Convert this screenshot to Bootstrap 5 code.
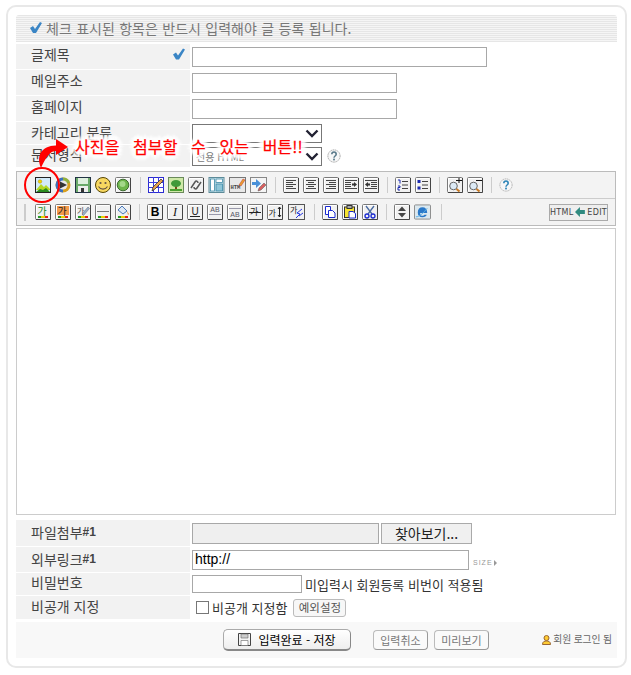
<!DOCTYPE html>
<html lang="ko">
<head>
<meta charset="utf-8">
<title>글쓰기</title>
<link href="https://cdn.jsdelivr.net/npm/bootstrap@5.3.0/dist/css/bootstrap.min.css" rel="stylesheet">
<style>
html,body{background:#fff;margin:0}
body{font-family:"Noto Sans CJK KR","Liberation Sans",sans-serif;font-size:14px;line-height:1;color:#333;position:relative;width:631px;height:675px;overflow:hidden}
.shell{width:621px;height:663px;margin:5px 0 0 6px;border:2px solid #e8e8e8;border-radius:10px;padding:8px}
.stripe{height:27px;margin-bottom:2px;border-radius:3px 3px 0 0;padding-left:14px;padding-bottom:2px;background:repeating-linear-gradient(#e6e6e6 0 1px,#f5f5f5 1px 2px);color:#777;word-spacing:.5px}
.frow{margin-bottom:1px}
.h25{height:25px}.h26{height:26px}.h22{height:22px}.h23{height:23px}
.lab{width:174px;height:100%;background:#f2f2f2;padding-left:15px;padding-right:5px;color:#444;padding-bottom:3px}
.lab.lb6{padding-bottom:6px}.lab.lb5{padding-bottom:5px}.lab.lb4{padding-bottom:4px}.lab.lb2{padding-bottom:1px}
.val{padding-left:2px;height:100%}
.fld.form-control{border:1px solid #a8a8a8;border-radius:0;height:20px;min-height:0;padding:0 2px;font-family:"Liberation Sans",sans-serif;font-size:14px;color:#000;box-shadow:none}
.w295{width:295px!important}.w205{width:205px!important}.w277{width:277px!important}.w110{width:110px!important}.w187{width:187px!important}
.h21{height:21px!important}.h18{height:18px!important}
.ro.form-control{background:#efefef}
.sel.form-select{width:130px;height:19px;min-height:0;border:1px solid #777;border-radius:0;padding:0 20px 0 3px;font-size:10px;line-height:17px;color:#777;background-image:url("data:image/svg+xml,%3csvg xmlns='http://www.w3.org/2000/svg' viewBox='0 0 14 9'%3e%3cpath fill='none' stroke='%23223' stroke-width='2.4' d='M1.500 1.500l5.500 5.500 5.500-5.500'/%3e%3c/svg%3e");background-position:right 2px center;background-size:14px 9px;box-shadow:none}
.sel-a.form-select{margin-top:1px}
.tbox{border:1px solid #bbb;height:55px;margin-top:4px;width:600px}
.tbar{height:26px;background:#f3f3f3}
.tdiv{height:1px;background:#ccc}
.ps18{padding-left:18px}.ps7{padding-left:7px}
.tset{gap:4px}
.ic{width:16px;height:16px;display:block;flex:none}
.ic17{width:17px}
.ic14{width:14px;height:14px}
.ms5{margin-left:5px}
.sepx{width:1px;height:16px;background:#ccc;margin:0 7px 0 8px;flex:none}
.sep9{margin-left:9px}.sep10{margin-left:10px}
.grip{width:2px;height:17px;background:#ccc;margin-right:9px;flex:none}
.nudge{margin-left:1px}
.hedit{width:59px;height:17px;margin-right:7px;border:1px solid #aaa;background:#eee;font:8px "DejaVu Sans",sans-serif;color:#444;letter-spacing:.3px;gap:2px}
.area{display:block;width:600px;height:287px;margin:2px 0 5px;border:1px solid #ccc;resize:none;background:#fff}
.brow{width:91px;height:21px;margin-left:2px;border:1px solid #aaa;background:#f0f0f0;color:#222;font-size:14px;padding:0}
.num{font-family:"Liberation Sans",sans-serif;font-weight:700;font-size:12px;color:#444}
.szs{font:7px "Liberation Sans",sans-serif;letter-spacing:1px;color:#999;margin-left:4px;margin-top:6px;gap:1px}
.tri{width:0;height:0;border-left:3px solid #999;border-top:3px solid transparent;border-bottom:3px solid transparent}
.note{margin-left:3px;color:#333;font-size:13px}
.cbx{width:13px;height:13px;margin:0 3px 0 4px;border:1px solid #777;background:#fff;appearance:none;flex:none}
.ptext{font-size:13px}
.exc{width:53px;height:18px;margin-left:6px;border:1px solid #bbb;border-radius:3px;background:#f7f7f7;font-size:11.5px;color:#555;padding:0}
.foot{height:36px;margin-top:3px;background:#f8f8f8;width:601px}
.btnsv{width:128px;height:22px;margin-left:207px;border:1px solid #aaa;border-right-color:#888;border-bottom:2px solid #888;border-radius:5px;background:linear-gradient(#fff,#eee);color:#000;font-size:12px;padding:0;gap:7px}
.btnsm{width:55px;height:20px;border:1px solid #bbb;border-right-color:#999;border-bottom-color:#999;border-radius:4px;background:#fafafa;color:#777;font-size:11px;padding:0}
.m22{margin-left:22px}.m6{margin-left:6px}
.mem{margin-left:auto;margin-right:5px;font-size:9.8px;color:#666;gap:2px;letter-spacing:-.1px}
.ckm{margin-left:auto;margin-right:0}
.mark-ov{position:absolute;left:0;top:0;pointer-events:none}
.callout{position:absolute;left:75px;top:137px;color:#f00;-webkit-text-stroke:.25px #f00;font-size:16px;line-height:18px;white-space:nowrap;word-spacing:9px;letter-spacing:.1px;
text-shadow:0 0 2px #fff,0 0 3px #fff,4px 0 2px #fff,-4px 0 2px #fff,0 4px 2px #fff,0 -4px 2px #fff,3px 3px 2px #fff,-3px -3px 2px #fff,3px -3px 2px #fff,-3px 3px 2px #fff,2px 0 2px #fff,-2px 0 2px #fff,0 2px 2px #fff,0 -2px 2px #fff,5px 0 3px #fff,-5px 0 3px #fff,0 5px 3px #fff,0 -5px 3px #fff}
</style>
</head>
<body>
<svg width="0" height="0" class="position-absolute">
<defs>
<symbol id="fr" viewBox="0 0 16 16"><rect x=".5" y=".5" width="15" height="15" rx="1" fill="#f1f1f1" stroke="#7a7a7a"/><path d="M15.5 1v14.5H1" fill="none" stroke="#444"/><path d="M1.5 14V1.5H14" fill="none" stroke="#fff"/></symbol>
<symbol id="bar" viewBox="0 0 16 16"><rect x="3" y="12" width="3" height="2" fill="#2a9a2a"/><rect x="6" y="12" width="4" height="2" fill="#e8d000"/><rect x="10" y="12" width="3" height="2" fill="#e02020"/></symbol>
<symbol id="i-img" viewBox="0 0 16 16"><rect x=".5" y=".5" width="15" height="15" fill="#d2eafa" stroke="#222"/><circle cx="5" cy="4.500" r="1.800" fill="#f5d400" stroke="#a08000" stroke-width=".4"/><path d="M1 13l5-6 3 3 2-2 4 4v1H1z" fill="#b4d824"/><path d="M1 15l4-3 3 1 3-2 4 4z" fill="#2a8a1e"/></symbol>
<symbol id="i-med" viewBox="0 0 16 16"><circle cx="8" cy="8" r="7.500" fill="#d8a020"/><path d="M8 .5A7.5 7.5 0 0 0 8 15.500z" fill="#3a6fc0"/><path d="M8 .5a7.500 7.500 0 0 1 7 5L8 8z" fill="#8fb040"/><circle cx="8" cy="8" r="4.500" fill="#e8e8e8"/><path d="M5 4.500l7 3.500-7 3.500z" fill="#333"/></symbol>
<symbol id="i-sav" viewBox="0 0 16 16"><rect x=".5" y=".5" width="15" height="15" fill="#6aa96a" stroke="#234"/><rect x="3" y="1" width="10" height="6" fill="#dff0df"/><rect x="3" y="9" width="10" height="6" fill="#eee"/><rect x="6" y="11" width="3" height="4" fill="#333"/></symbol>
<symbol id="i-smi" viewBox="0 0 16 16"><circle cx="8" cy="8" r="7.500" fill="#f8d860" stroke="#554400"/><circle cx="5.500" cy="6" r="1.100" fill="#654"/><circle cx="10.500" cy="6" r="1.100" fill="#654"/><path d="M3.500 9.500c2 3.500 7 3.500 9 0" fill="none" stroke="#654" stroke-width="1.100"/></symbol>
<symbol id="i-bal" viewBox="0 0 16 16"><use href="#fr"/><circle cx="8" cy="8" r="5.800" fill="#6db54b" stroke="#3c6a30"/><circle cx="7.500" cy="7" r="3" fill="#a4d88a"/></symbol>
<symbol id="i-tab" viewBox="0 0 16 16"><rect x=".5" y=".5" width="15" height="15" fill="#fff" stroke="#2c2cd0"/><path d="M5.500 0v16M10.500 0v16M0 5.500h16M0 10.500h16" stroke="#3a3ae0"/><path d="M4 14l1-4 8-8 2 2-8 8z" fill="#e8a050" stroke="#222" stroke-width=".7"/></symbol>
<symbol id="i-tre" viewBox="0 0 16 16"><rect x=".5" y=".5" width="15" height="15" fill="#cfe9a8" stroke="#6a8a5a"/><rect x="7" y="9" width="2" height="4" fill="#7a4a1a"/><ellipse cx="8" cy="6.500" rx="5" ry="3.500" fill="#3f9a3a"/><rect x="2" y="12" width="12" height="2" fill="#4aa030"/></symbol>
<symbol id="i-lnk" viewBox="0 0 16 16"><use href="#fr"/><path d="M3 11l4-6c1-1.500 3-1 3 1M6 10c0 2 2 2.500 3 1l4-6" fill="none" stroke="#555" stroke-width="1.500"/></symbol>
<symbol id="i-lay" viewBox="0 0 16 16"><rect x=".5" y=".5" width="15" height="15" fill="#cfe4ea" stroke="#5c8a98"/><rect x="2" y="2" width="4" height="12" fill="#fff" stroke="#3d8aa8" stroke-width=".8"/><rect x="7.500" y="2" width="6.500" height="3.500" fill="#fff" stroke="#3d8aa8" stroke-width=".8"/><rect x="7.500" y="7" width="6.500" height="7" fill="#8fc6d8" stroke="#3d8aa8" stroke-width=".8"/></symbol>
<symbol id="i-htm" viewBox="0 0 17 16"><rect x=".5" y=".5" width="16" height="15" fill="#e8e8e8" stroke="#777"/><text x="1.500" y="12" font-family="Liberation Mono,monospace" font-weight="700" font-size="5.500" fill="#444">HTM</text><path d="M10 8l4-6 2 1-4 6z" fill="#e8a030" stroke="#c03030" stroke-width=".5"/></symbol>
<symbol id="i-edt" viewBox="0 0 17 16"><rect x=".5" y=".5" width="16" height="15" fill="#f5f5f5" stroke="#888"/><path d="M2 5h4V2l5 4.500L6 11V8H2z" fill="#4a90d8"/><path d="M8 14l1-3 5-5 2 2-5 5z" fill="#d86060" stroke="#555" stroke-width=".5"/></symbol>
<symbol id="i-al" viewBox="0 0 16 16"><use href="#fr"/><path d="M3 3.500h10M3 5.500h7M3 7.500h10M3 9.500h7M3 11.500h10" stroke="#444"/></symbol>
<symbol id="i-ac" viewBox="0 0 16 16"><use href="#fr"/><path d="M3 3.500h10M5 5.500h6M3 7.500h10M5 9.500h6M3 11.500h10" stroke="#444"/></symbol>
<symbol id="i-ar" viewBox="0 0 16 16"><use href="#fr"/><path d="M3 3.500h10M6 5.500h7M3 7.500h10M6 9.500h7M3 11.500h10" stroke="#444"/></symbol>
<symbol id="i-in" viewBox="0 0 16 16"><use href="#fr"/><path d="M2 3.500h12M2 5.500h6M2 7.500h6M2 9.500h6M2 11.500h12" stroke="#444"/><path d="M9 6.500h2V5l3 2.500L11 10V8.500H9z" fill="#333"/></symbol>
<symbol id="i-ou" viewBox="0 0 16 16"><use href="#fr"/><path d="M2 3.500h12M8 5.500h6M8 7.500h6M8 9.500h6M2 11.500h12" stroke="#444"/><path d="M7 6.500H5V5L2 7.500 5 10V8.500h2z" fill="#333"/></symbol>
<symbol id="i-ol" viewBox="0 0 16 16"><use href="#fr"/><path d="M3 3h2v3.500M3 9h2v1.500H3V13h2" fill="none" stroke="#1a2ab0"/><path d="M7 4.500h6M7 8h6M7 11.500h6" stroke="#444"/></symbol>
<symbol id="i-ul" viewBox="0 0 16 16"><use href="#fr"/><rect x="2.500" y="3" width="3" height="3" fill="#1a2ab0"/><rect x="2.500" y="9.500" width="3" height="3" fill="#1a2ab0"/><path d="M7 4.500h6M7 8h6M7 11.500h6" stroke="#444"/></symbol>
<symbol id="i-zin" viewBox="0 0 16 16"><use href="#fr"/><circle cx="6.500" cy="9" r="3.800" fill="#dceaf5" stroke="#666"/><path d="M9.500 12l3 2.500" stroke="#c87820" stroke-width="2"/><path d="M9 3.500h6M12 1v5" stroke="#111"/></symbol>
<symbol id="i-zou" viewBox="0 0 16 16"><use href="#fr"/><circle cx="6.500" cy="9" r="3.800" fill="#dceaf5" stroke="#666"/><path d="M9.500 12l3 2.500" stroke="#c87820" stroke-width="2"/><path d="M9 3.500h6" stroke="#111"/></symbol>
<symbol id="i-hlp" viewBox="0 0 16 16"><circle cx="8" cy="8" r="7" fill="#f7f7f7" stroke="#aaa" stroke-dasharray="1.500 .7"/><path d="M5.500 6c0-3.500 5-3.500 5 0 0 2-2.500 2-2.500 4" fill="none" stroke="#2f86b8" stroke-width="1.800"/><rect x="7" y="11" width="2" height="2" fill="#2f86b8"/></symbol>
<symbol id="i-hl2" viewBox="0 0 16 16"><circle cx="8" cy="8" r="7" fill="#f7f7f7" stroke="#999" stroke-dasharray="1.500 .7"/><path d="M5.500 6c0-3.500 5-3.500 5 0 0 2-2.500 2-2.500 4" fill="none" stroke="#5a7a8a" stroke-width="1.800"/><rect x="7" y="11" width="2" height="2" fill="#5a7a8a"/></symbol>
<symbol id="k-grn" viewBox="0 0 16 16"><use href="#fr"/><text x="2.500" y="10.500" font-size="10" fill="#1a8a1a">가</text><use href="#bar"/></symbol>
<symbol id="k-org" viewBox="0 0 16 16"><use href="#fr"/><rect x="2" y="2" width="12" height="9" fill="#f59a4a"/><text x="2.500" y="10.500" font-size="10" fill="#222">가</text><use href="#bar"/></symbol>
<symbol id="k-pen" viewBox="0 0 16 16"><use href="#fr"/><text x="2" y="9.500" font-size="8" fill="#555">가</text><path d="M7 10l6-7 1.500 1.500-6 7z" fill="#9ab0c8" stroke="#667" stroke-width=".5"/><use href="#bar"/></symbol>
<symbol id="k-lin" viewBox="0 0 16 16"><use href="#fr"/><path d="M2 7.500h12" stroke="#777"/><use href="#bar"/></symbol>
<symbol id="k-bkt" viewBox="0 0 16 16"><use href="#fr"/><path d="M3 6l4-4 5 5-4 3z" fill="#dde8f5" stroke="#4a78b8"/><path d="M12 7l2 3-1 1z" fill="#e88a3a"/><use href="#bar"/></symbol>
<symbol id="k-b" viewBox="0 0 16 16"><use href="#fr"/><text x="8" y="12" text-anchor="middle" font-family="Liberation Sans,sans-serif" font-weight="700" font-size="12" fill="#000">B</text></symbol>
<symbol id="k-i" viewBox="0 0 16 16"><use href="#fr"/><text x="8" y="12" text-anchor="middle" font-family="Liberation Serif,serif" font-style="italic" font-size="12" fill="#111">I</text></symbol>
<symbol id="k-u" viewBox="0 0 16 16"><use href="#fr"/><text x="8" y="11" text-anchor="middle" font-family="Liberation Sans,sans-serif" font-size="10" fill="#222">U</text><path d="M3 12.500h10" stroke="#222"/></symbol>
<symbol id="k-sup" viewBox="0 0 16 16"><use href="#fr"/><text x="8" y="8" text-anchor="middle" font-family="Liberation Sans,sans-serif" font-size="7" fill="#556">AB</text><path d="M2 10.500h12" stroke="#99a"/></symbol>
<symbol id="k-sub" viewBox="0 0 16 16"><use href="#fr"/><path d="M2 4.500h12" stroke="#99a"/><text x="8" y="13" text-anchor="middle" font-family="Liberation Sans,sans-serif" font-size="7" fill="#556">AB</text></symbol>
<symbol id="k-hsp" viewBox="0 0 16 16"><use href="#fr"/><text x="3" y="11" font-size="9" fill="#222">가</text><path d="M2 8.500h12" stroke="#222"/></symbol>
<symbol id="k-vsp" viewBox="0 0 16 16"><use href="#fr"/><text x="1.500" y="11.500" font-size="8" fill="#222">가</text><path d="M12.500 3v10M11 5l1.500-2L14 5M11 11l1.500 2 1.500-2" fill="none" stroke="#222"/></symbol>
<symbol id="k-zig" viewBox="0 0 17 16"><rect x=".5" y=".5" width="16" height="15" fill="#f1f1f1" stroke="#555"/><text x="2" y="9" font-size="8" fill="#222">가</text><path d="M8 14l4-4-3-1 5-4M11 12l4-3" fill="none" stroke="#2838e0"/></symbol>
<symbol id="k-cpy" viewBox="0 0 16 16"><use href="#fr"/><path d="M3.500 2.500h5v8h-5z" fill="#fff" stroke="#1a2ad0"/><path d="M6.500 6.500h4l2.500 2.500v4.500h-6.500z" fill="#fff" stroke="#1a2ad0"/></symbol>
<symbol id="k-pst" viewBox="0 0 16 16"><use href="#fr"/><rect x="2.500" y="3" width="10" height="10.500" fill="#f7e430" stroke="#333"/><rect x="5" y="1.500" width="5" height="3" fill="#aaa" stroke="#333"/><path d="M7 7.500h4l2.500 2v4.500H7z" fill="#fff" stroke="#1a2ad0"/></symbol>
<symbol id="k-cut" viewBox="0 0 16 16"><use href="#fr"/><path d="M4 2l6 8M12 2l-6 8" stroke="#4a6aa0" stroke-width="1.300"/><circle cx="5" cy="12" r="2" fill="none" stroke="#1a2ad0" stroke-width="1.300"/><circle cx="11" cy="12" r="2" fill="none" stroke="#1a2ad0" stroke-width="1.300"/></symbol>
<symbol id="k-ud" viewBox="0 0 16 16"><use href="#fr"/><path d="M8 2.500L12 7H4zM8 13.500L4 9h8z" fill="#444"/></symbol>
<symbol id="k-ie" viewBox="0 0 18 16"><rect x=".5" y=".5" width="17" height="15" rx="1" fill="#dbe8ef" stroke="#888"/><path d="M5 9h9c0-4-2-6-5-6S4 5 4 8.500 6 13.500 9 13.500c2.500 0 4-1 4.500-2.500H11c-.5.700-1 1-2 1-1.500 0-2.500-1-2.500-3" fill="#2a78c8"/><path d="M2 13c3 1 9-5 12-9" fill="none" stroke="#5ab0e8"/></symbol>
</defs>
</svg>

<div class="shell">
  <div class="stripe d-flex align-items-center"><svg width="12" height="11" viewBox="0 0 12 11" class="me-1"><path d="M0 6l3-2 2 3 5-7 2 1-6 10H3z" fill="#3a85c5"/></svg>체크 표시된 항목은 반드시 입력해야 글 등록 됩니다.</div>

  <div class="frow d-flex h25"><div class="lab lb6 d-flex align-items-center">글제목<svg class="ckm" width="12" height="12" viewBox="0 0 12 11"><path d="M0 6l3-2 2 3 5-7 2 1-6 10H3z" fill="#3a85c5"/></svg></div><div class="val d-flex align-items-center"><input class="form-control fld w295" type="text"></div></div>
  <div class="frow d-flex h25"><div class="lab lb6 d-flex align-items-center">메일주소</div><div class="val d-flex align-items-center"><input class="form-control fld w205" type="text"></div></div>
  <div class="frow d-flex h25"><div class="lab lb6 d-flex align-items-center">홈페이지</div><div class="val d-flex align-items-center"><input class="form-control fld w205" type="text"></div></div>
  <div class="frow d-flex h22"><div class="lab d-flex align-items-center">카테고리 분류</div><div class="val d-flex align-items-center"><select class="form-select sel sel-a"><option></option></select></div></div>
  <div class="frow d-flex h22"><div class="lab lb5 d-flex align-items-center">문서형식</div><div class="val d-flex align-items-center"><select class="form-select sel"><option>전용 HTML</option></select><svg class="ic ic14 ms5" viewBox="0 0 16 16"><use href="#i-hl2"/></svg></div></div>

  <div class="tbox">
    <div class="tbar d-flex align-items-center ps18">
      <div class="d-flex tset"><svg class="ic"><use href="#i-img"/></svg><svg class="ic"><use href="#i-med"/></svg><svg class="ic"><use href="#i-sav"/></svg><svg class="ic"><use href="#i-smi"/></svg><svg class="ic"><use href="#i-bal"/></svg></div>
      <span class="sepx sep9"></span>
      <div class="d-flex tset"><svg class="ic"><use href="#i-tab"/></svg><svg class="ic"><use href="#i-tre"/></svg><svg class="ic"><use href="#i-lnk"/></svg><svg class="ic ic17"><use href="#i-lay"/></svg><svg class="ic ic17"><use href="#i-htm"/></svg><svg class="ic ic17"><use href="#i-edt"/></svg></div>
      <span class="sepx"></span>
      <div class="d-flex tset"><svg class="ic"><use href="#i-al"/></svg><svg class="ic"><use href="#i-ac"/></svg><svg class="ic"><use href="#i-ar"/></svg><svg class="ic"><use href="#i-in"/></svg><svg class="ic"><use href="#i-ou"/></svg></div>
      <span class="sepx"></span>
      <div class="d-flex tset"><svg class="ic"><use href="#i-ol"/></svg><svg class="ic"><use href="#i-ul"/></svg></div>
      <span class="sepx"></span>
      <div class="d-flex tset"><svg class="ic"><use href="#i-zin"/></svg><svg class="ic"><use href="#i-zou"/></svg></div>
      <span class="sepx"></span>
      <svg class="ic ic14" viewBox="0 0 16 16"><use href="#i-hlp"/></svg>
    </div>
    <div class="tdiv"></div>
    <div class="tbar d-flex align-items-center ps7">
      <span class="grip"></span>
      <div class="d-flex tset"><svg class="ic"><use href="#k-grn"/></svg><svg class="ic"><use href="#k-org"/></svg><svg class="ic"><use href="#k-pen"/></svg><svg class="ic"><use href="#k-lin"/></svg><svg class="ic"><use href="#k-bkt"/></svg></div>
      <span class="sepx"></span>
      <div class="d-flex tset"><svg class="ic"><use href="#k-b"/></svg><svg class="ic"><use href="#k-i"/></svg><svg class="ic"><use href="#k-u"/></svg><svg class="ic"><use href="#k-sup"/></svg><svg class="ic"><use href="#k-sub"/></svg><svg class="ic"><use href="#k-hsp"/></svg><svg class="ic"><use href="#k-vsp"/></svg><svg class="ic ic17 nudge"><use href="#k-zig"/></svg></div>
      <span class="sepx sep9"></span>
      <div class="d-flex tset"><svg class="ic"><use href="#k-cpy"/></svg><svg class="ic"><use href="#k-pst"/></svg><svg class="ic"><use href="#k-cut"/></svg></div>
      <span class="sepx"></span>
      <div class="d-flex tset"><svg class="ic"><use href="#k-ud"/></svg><svg class="ic ic17"><use href="#k-ie"/></svg></div>
      <span class="sepx sep10"></span>
      <div class="hedit ms-auto d-flex align-items-center justify-content-center">HTML<svg width="10" height="10" viewBox="0 0 10 10"><path d="M0 5l5-5v3h5v4H5v3z" fill="#2f8a80"/></svg>EDIT</div>
    </div>
  </div>

  <textarea class="area" aria-label="본문"></textarea>

  <div class="frow d-flex h26"><div class="lab d-flex align-items-center">파일첨부<span class="num">#1</span></div><div class="val d-flex align-items-center"><input class="form-control fld ro w187 h21" type="text" disabled><button class="brow" type="button">찾아보기...</button></div></div>
  <div class="frow d-flex h25"><div class="lab lb2 d-flex align-items-center">외부링크<span class="num">#1</span></div><div class="val d-flex align-items-center"><input class="form-control fld w277" type="text" value="http://"><span class="szs d-flex align-items-center">SIZE<i class="tri"></i></span></div></div>
  <div class="frow d-flex h22"><div class="lab lb4 d-flex align-items-center">비밀번호</div><div class="val d-flex align-items-center"><input class="form-control fld w110 h18" type="text"><span class="note">미입력시 회원등록 비번이 적용됨</span></div></div>
  <div class="d-flex h23"><div class="lab lb4 d-flex align-items-center">비공개 지정</div><div class="val d-flex align-items-center"><input class="cbx" type="checkbox" aria-label="비공개"><span class="ptext">비공개 지정함</span><button class="exc" type="button">예외설정</button></div></div>

  <div class="foot d-flex align-items-center">
    <button class="btnsv d-flex align-items-center justify-content-center" type="button"><svg width="13" height="13" viewBox="0 0 13 13"><path d="M.5.500h12v12H.500z" fill="#f4f4f4" stroke="#444"/><path d="M3 1h7v4H3z" fill="#ccc" stroke="#666" stroke-width=".6"/><path d="M3 7.500h7v5H3z" fill="#fff" stroke="#666" stroke-width=".6"/></svg>입력완료 - 저장</button>
    <button class="btnsm m22" type="button">입력취소</button>
    <button class="btnsm m6" type="button">미리보기</button>
    <span class="mem d-flex align-items-center"><svg width="9" height="10" viewBox="0 0 9 10"><circle cx="4.500" cy="3" r="2.500" fill="#fc3" stroke="#963"/><path d="M.5 9.500c0-3 2-3.500 4-3.500s4 .500 4 3.500z" fill="#fc3" stroke="#963"/></svg>회원 로그인 됨</span>
  </div>
</div>

<div class="callout">사진을 첨부할 수 있는 버튼!!</div>
<svg class="mark-ov" width="631" height="675" viewBox="0 0 631 675">
  <ellipse cx="42" cy="185" rx="17" ry="17" fill="none" stroke="#f00" stroke-width="2"/>
  <path d="M41 168C36 156 41 146 56 145.500V139L68 147 56 155V151C50 151 46 157 41 168z" fill="#f00"/>
</svg>
<script src="https://cdn.jsdelivr.net/npm/bootstrap@5.3.0/dist/js/bootstrap.bundle.min.js"></script>
</body>
</html>
